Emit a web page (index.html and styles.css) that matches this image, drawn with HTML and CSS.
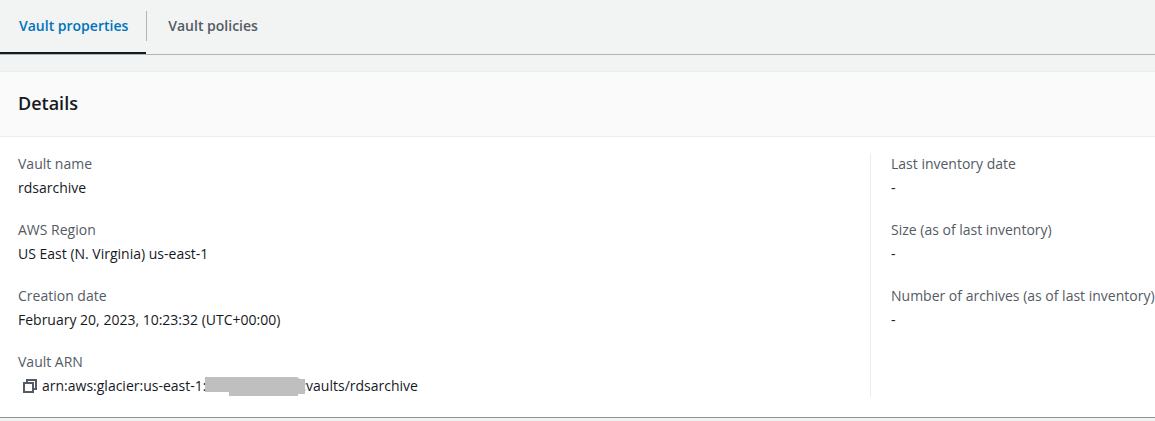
FILE: index.html
```html
<!DOCTYPE html>
<html lang="en">
<head>
    <meta charset="UTF-8">
    <meta name="viewport" content="width=device-width, initial-scale=1.0">
    <title>Vault properties</title>
    <link rel="stylesheet" href="styles.css">
</head>
<body>

<div class="tabs" role="tablist">
    <button class="tab active" type="button" role="tab" id="propertiesTab" aria-selected="true" aria-controls="properties">Vault properties</button>
    <button class="tab" type="button" role="tab" aria-selected="false">Vault policies</button>
</div>

<main class="panel" id="properties" role="tabpanel" aria-labelledby="propertiesTab">
    <header class="panel-header">
        <h2>Details</h2>
    </header>

    <div class="panel-body">
        <dl class="column">
            <div class="field">
                <dt>Vault name</dt>
                <dd>rdsarchive</dd>
            </div>
            <div class="field">
                <dt>AWS Region</dt>
                <dd>US East (N. Virginia) us-east-1</dd>
            </div>
            <div class="field">
                <dt>Creation date</dt>
                <dd>February 20, 2023, 10:23:32 (UTC+00:00)</dd>
            </div>
            <div class="field">
                <dt>Vault ARN</dt>
                <dd class="arn">
                    <button class="copy" type="button" aria-label="Copy ARN">
                        <svg width="16" height="16" viewBox="0 0 16 16" fill="none" stroke="#545b64" stroke-width="2">
                            <path d="M2 5h9v9H2z"/>
                            <path d="M5 5V2h9v9h-3"/>
                        </svg>
                    </button>
                    <span>arn:aws:glacier:us-east-1:</span>
                    <!-- account id is hidden -->
                    <svg class="mask" width="100" height="20" viewBox="0 0 100 20" aria-hidden="true">
                        <path d="M0 1h92l3 2h5v15h-7v2H24v-4H0z" fill="#bfbfbf"/>
                    </svg>
                    <span>:vaults/rdsarchive</span>
                </dd>
            </div>
        </dl>

        <dl class="column side">
            <div class="field">
                <dt>Last inventory date</dt>
                <dd>-</dd>
            </div>
            <div class="field">
                <dt>Size (as of last inventory)</dt>
                <dd>-</dd>
            </div>
            <div class="field">
                <dt>Number of archives (as of last inventory)</dt>
                <dd>-</dd>
            </div>
        </dl>
    </div>
</main>

</body>
</html>
```

FILE: styles.css
```css
* {
    margin: 0;
    padding: 0;
    box-sizing: border-box;
}

body {
    font-family: 'Open Sans', 'Noto Sans', sans-serif;
    font-size: 14px;
    line-height: 22px;
    background: #f2f3f3;
    color: #16191f;
}

button {
    font: inherit;
    background: none;
    border: none;
    cursor: pointer;
}

.tabs {
    display: flex;
    border-bottom: 1px solid #aab7b8;
}

.tab {
    position: relative;
    padding: 15px 22px;
    border-bottom: 2px solid transparent;
    font-weight: 600;
    color: #545b64;
}

.tab.active {
    padding: 15px 18px 15px 19px;
    border-bottom-color: #16191f;
    color: #0073bb;
}

/* divider between the tabs */
.tab + .tab::before {
    content: "";
    position: absolute;
    left: 0;
    top: 11px;
    height: 30px;
    border-left: 1px solid #aab7b8;
}

.panel {
    margin-top: 16px;
    background: #fff;
    border-top: 1px solid #eaeded;
    border-bottom: 1px solid #879596;
}

.panel-header {
    padding: 20px 18px 22px;
    background: #fafafa;
    border-bottom: 1px solid #eaeded;
}

.panel-header h2 {
    font-size: 18px;
    line-height: 22px;
    font-weight: 600;
}

.panel-body {
    display: flex;
    padding: 16px 0 20px;
}

.column {
    display: flex;
    flex: 1;
    flex-direction: column;
    gap: 20px;
    padding-left: 18px;
}

.side {
    flex: 0 0 285px;
    padding-left: 20px;
    border-left: 1px solid #eaeded;
}

.field dt {
    margin-bottom: 2px;
    color: #545b64;
    white-space: nowrap;
}

.arn {
    display: flex;
    align-items: center;
}

.copy {
    display: flex;
    padding: 0 4px;
}

.mask {
    margin-left: -1px;
    margin-right: -3px;
    z-index: 1;
}
```
